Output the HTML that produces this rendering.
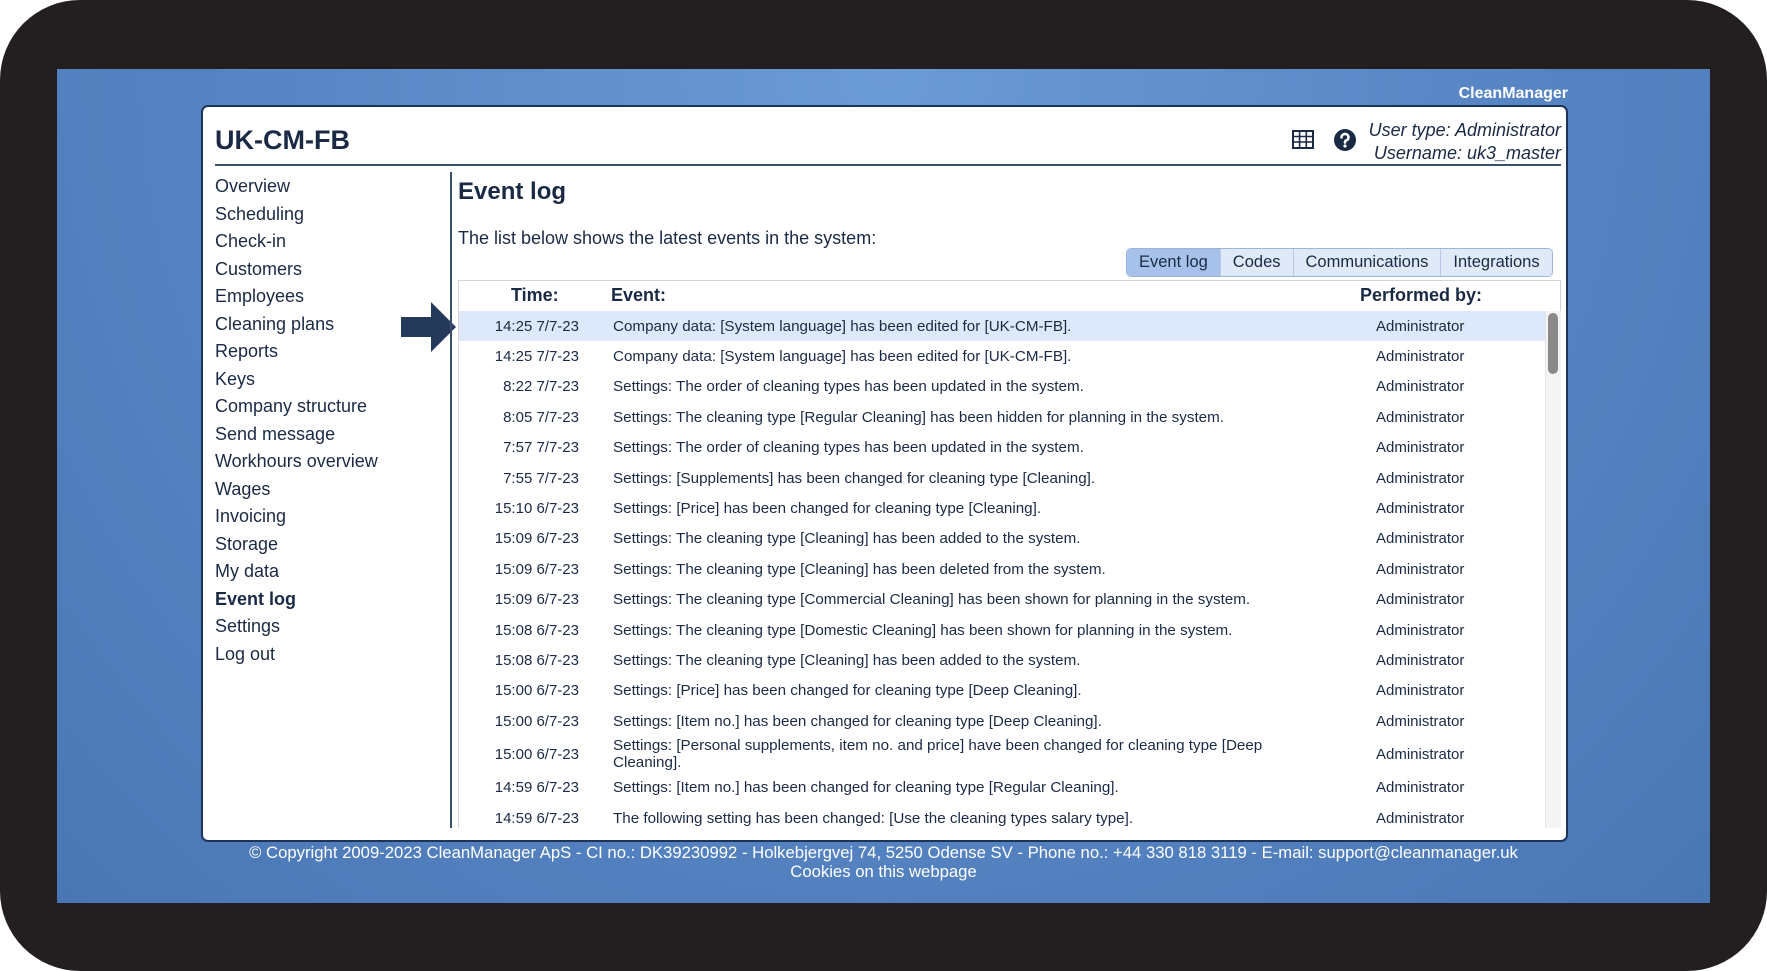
<!DOCTYPE html>
<html><head><meta charset="utf-8"><style>
*{margin:0;padding:0;box-sizing:border-box}
body{width:1767px;height:971px;background:#fff;font-family:"Liberation Sans",sans-serif;overflow:hidden;position:relative}
.frame{position:absolute;left:0;top:0;width:1767px;height:971px;background:#231f20;border-radius:80px}
.screen{position:absolute;left:57px;top:69px;width:1653px;height:834px;background:radial-gradient(ellipse at 50% 0%,#6b9bd6 0%,#5a88c6 45%,#4a76b4 100%)}
.brand{position:absolute;right:199px;top:85px;color:#fff;font-weight:bold;font-size:16px}
.panel{position:absolute;left:201px;top:105px;width:1367px;height:737px;background:#fff;border:2px solid #1d3458;border-radius:7px}
.title{position:absolute;left:215px;top:125px;font-size:27px;font-weight:bold;color:#1a2a45}
.hline{position:absolute;left:215px;top:164px;width:1346px;height:2px;background:#3a4f6e}
.user{position:absolute;right:206px;top:119px;text-align:right;font-style:italic;font-size:18px;color:#1a2a45;line-height:23px}
.nav{position:absolute;left:215px;top:173px;font-size:18px;color:#1a2a45;line-height:27.5px}
.nav b{font-weight:bold}
.vline{position:absolute;left:450px;top:172px;width:2px;height:656px;background:#3a4f6e}
.h2{position:absolute;left:458px;top:178px;font-size:24px;font-weight:bold;color:#1a2a45}
.desc{position:absolute;left:458px;top:228px;font-size:18px;color:#1a2a45}
.tabs{position:absolute;left:1126px;top:248px;height:29px;display:flex;border:1px solid #9bb5dc;border-radius:5px;overflow:hidden;font-size:16.5px;color:#1a2a45}
.tabs div{padding:0 12px;line-height:27px;background:#dfe9f7;border-left:1px solid #b6c9e6}
.tabs div:first-child{background:#a7c2ea;border-left:none}
.box{position:absolute;left:458px;top:280px;width:1103px;height:548px;border:1px solid #d4d4d4;border-bottom:none;overflow:hidden}
.th{position:absolute;top:285px;font-size:18px;font-weight:bold;color:#1a2a45}
.rows{position:absolute;left:459px;top:311px;width:1086px;height:517px;overflow:hidden;font-size:15px;color:#1a2a45}
.r{display:flex;align-items:center;height:30.4px}
.r.hl{background:#dde9fb}
.r .t{width:120px;text-align:right}
.r .e{width:660px;margin-left:34px;line-height:17px;font-size:15.2px}
.r .a{margin-left:103px}
.sb{position:absolute;left:1548px;top:313px;width:10px;height:61px;background:#8a8a8a;border-radius:5px}
.sbt{position:absolute;left:1545px;top:311px;width:16px;height:517px;background:#f4f4f4;border-left:1px solid #e4e4e4}
.foot{position:absolute;left:57px;width:1653px;text-align:center;color:#fff;font-size:16.7px}
</style></head><body>
<div class="frame"></div>
<div class="screen"></div>
<div class="brand">CleanManager</div>
<div class="panel"></div>
<div class="title">UK-CM-FB</div>
<div class="hline"></div>
<svg style="position:absolute;left:1292px;top:130px" width="22" height="19" viewBox="0 0 22 19"><rect x="1" y="1" width="20" height="17" fill="none" stroke="#1a2a45" stroke-width="2"/><path d="M1 6.5H21M1 12H21M7.6 1V18M14.3 1V18" stroke="#1a2a45" stroke-width="1.6"/></svg>
<svg style="position:absolute;left:1334px;top:129px" width="22" height="22" viewBox="0 0 22 22"><circle cx="11" cy="11" r="11" fill="#1a2a45"/><path d="M7.5 8.3a3.5 3.3 0 1 1 4.6 3.1c-1 .5-1.1 1-1.1 2.1" fill="none" stroke="#fff" stroke-width="2.6" stroke-linecap="round"/><circle cx="11" cy="17" r="1.6" fill="#fff"/></svg>
<div class="user">User type: Administrator<br>Username: uk3_master</div>
<div class="nav">Overview<br>Scheduling<br>Check-in<br>Customers<br>Employees<br>Cleaning plans<br>Reports<br>Keys<br>Company structure<br>Send message<br>Workhours overview<br>Wages<br>Invoicing<br>Storage<br>My data<br><b>Event log</b><br>Settings<br>Log out</div>
<svg style="position:absolute;left:401px;top:302px" width="56" height="50" viewBox="0 0 56 50"><path d="M0 15H30V0L55 25L30 50V35H0Z" fill="#25395a"/></svg>
<div class="vline"></div>
<div class="h2">Event log</div>
<div class="desc">The list below shows the latest events in the system:</div>
<div class="tabs"><div>Event log</div><div>Codes</div><div>Communications</div><div>Integrations</div></div>
<div class="box"></div>
<div class="th" style="left:511px">Time:</div>
<div class="th" style="left:611px">Event:</div>
<div class="th" style="left:1360px">Performed by:</div>
<div class="rows">
<div class="r hl"><div class="t">14:25 7/7-23</div><div class="e">Company data: [System language] has been edited for [UK-CM-FB].</div><div class="a">Administrator</div></div>
<div class="r"><div class="t">14:25 7/7-23</div><div class="e">Company data: [System language] has been edited for [UK-CM-FB].</div><div class="a">Administrator</div></div>
<div class="r"><div class="t">8:22 7/7-23</div><div class="e">Settings: The order of cleaning types has been updated in the system.</div><div class="a">Administrator</div></div>
<div class="r"><div class="t">8:05 7/7-23</div><div class="e">Settings: The cleaning type [Regular Cleaning] has been hidden for planning in the system.</div><div class="a">Administrator</div></div>
<div class="r"><div class="t">7:57 7/7-23</div><div class="e">Settings: The order of cleaning types has been updated in the system.</div><div class="a">Administrator</div></div>
<div class="r"><div class="t">7:55 7/7-23</div><div class="e">Settings: [Supplements] has been changed for cleaning type [Cleaning].</div><div class="a">Administrator</div></div>
<div class="r"><div class="t">15:10 6/7-23</div><div class="e">Settings: [Price] has been changed for cleaning type [Cleaning].</div><div class="a">Administrator</div></div>
<div class="r"><div class="t">15:09 6/7-23</div><div class="e">Settings: The cleaning type [Cleaning] has been added to the system.</div><div class="a">Administrator</div></div>
<div class="r"><div class="t">15:09 6/7-23</div><div class="e">Settings: The cleaning type [Cleaning] has been deleted from the system.</div><div class="a">Administrator</div></div>
<div class="r"><div class="t">15:09 6/7-23</div><div class="e">Settings: The cleaning type [Commercial Cleaning] has been shown for planning in the system.</div><div class="a">Administrator</div></div>
<div class="r"><div class="t">15:08 6/7-23</div><div class="e">Settings: The cleaning type [Domestic Cleaning] has been shown for planning in the system.</div><div class="a">Administrator</div></div>
<div class="r"><div class="t">15:08 6/7-23</div><div class="e">Settings: The cleaning type [Cleaning] has been added to the system.</div><div class="a">Administrator</div></div>
<div class="r"><div class="t">15:00 6/7-23</div><div class="e">Settings: [Price] has been changed for cleaning type [Deep Cleaning].</div><div class="a">Administrator</div></div>
<div class="r"><div class="t">15:00 6/7-23</div><div class="e">Settings: [Item no.] has been changed for cleaning type [Deep Cleaning].</div><div class="a">Administrator</div></div>
<div class="r" style="height:36px"><div class="t">15:00 6/7-23</div><div class="e">Settings: [Personal supplements, item no. and price] have been changed for cleaning type [Deep Cleaning].</div><div class="a">Administrator</div></div>
<div class="r"><div class="t">14:59 6/7-23</div><div class="e">Settings: [Item no.] has been changed for cleaning type [Regular Cleaning].</div><div class="a">Administrator</div></div>
<div class="r"><div class="t">14:59 6/7-23</div><div class="e">The following setting has been changed: [Use the cleaning types salary type].</div><div class="a">Administrator</div></div>
</div>
<div class="sbt"></div>
<div class="sb"></div>
<div class="foot" style="top:843px">© Copyright 2009-2023 CleanManager ApS - CI no.: DK39230992 - Holkebjergvej 74, 5250 Odense SV - Phone no.: +44 330 818 3119 - E-mail: support@cleanmanager.uk</div>
<div class="foot" style="top:862px">Cookies on this webpage</div>
</body></html>
